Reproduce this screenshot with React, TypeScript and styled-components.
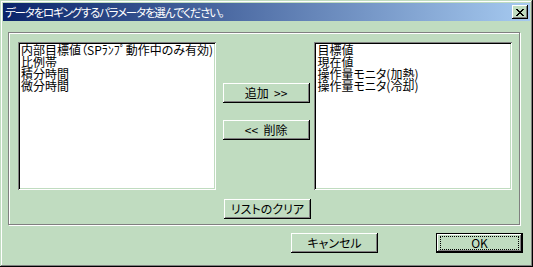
import React from 'react'
import styled, { createGlobalStyle, css } from 'styled-components'

const FACE = '#c0dcc0'

const GlobalStyle = createGlobalStyle`
  html, body {
    margin: 0;
    padding: 0;
    background: ${FACE};
  }
  body {
    font-family: "Noto Sans CJK JP", "Noto Sans", sans-serif;
    font-size: 12px;
    font-feature-settings: "palt";
  }
`

const leftItems = ['内部目標値（SPﾗﾝﾌﾟ動作中のみ有効)', '比例帯', '積分時間', '微分時間']
const rightItems = ['目標値', '現在値', '操作量モニタ(加熱)', '操作量モニタ(冷却)']

const App: React.FC = () => {
  return (
    <>
      <GlobalStyle />
      <Window>
        <TitleBar>
          <TitleText>データをロギングするパラメータを選んでください。</TitleText>
          <CloseButton aria-label="close">
            <svg width="8" height="7" viewBox="0 0 8 7" shapeRendering="crispEdges">
              <path
                fill="#000"
                d="M0 0h2v1h-2zM6 0h2v1h-2zM1 1h2v1h-2zM5 1h2v1h-2zM2 2h4v1h-4zM3 3h2v1h-2zM2 4h4v1h-4zM1 5h2v1h-2zM5 5h2v1h-2zM0 6h2v1h-2zM6 6h2v1h-2z"
              />
            </svg>
          </CloseButton>
        </TitleBar>
        <Body>
          <GroupBox>
            <ListsRow>
              <ListBox>
                {leftItems.map((t) => (
                  <ListItem key={t}>{t}</ListItem>
                ))}
              </ListBox>
              <MiddleCol>
                <Button>追加&nbsp;&nbsp;&gt;&gt;</Button>
                <Button>&lt;&lt;&nbsp;&nbsp;削除</Button>
              </MiddleCol>
              <ListBox>
                {rightItems.map((t) => (
                  <ListItem key={t}>{t}</ListItem>
                ))}
              </ListBox>
            </ListsRow>
            <ClearRow>
              <Button>リストのクリア</Button>
            </ClearRow>
          </GroupBox>
          <Footer>
            <Button>キャンセル</Button>
            <Button $default>
              <FocusRing>OK</FocusRing>
            </Button>
          </Footer>
        </Body>
      </Window>
    </>
  )
}

const Window = styled.div`
  width: 533px;
  height: 267px;
  box-sizing: border-box;
  padding: 3px;
  display: flex;
  flex-direction: column;
  background: ${FACE};
  box-shadow: inset -1px -1px #000, inset 1px 1px ${FACE}, inset -2px -2px #808080,
    inset 2px 2px #fff;
`

const TitleBar = styled.div`
  height: 18px;
  display: flex;
  align-items: center;
  justify-content: space-between;
  padding: 0 2px 0 2px;
  background: linear-gradient(to right, #0a246a, #a6caf0);
`

const TitleText = styled.div`
  color: #fff;
  font-size: 11.5px;
  letter-spacing: -1.2px;
  line-height: 18px;
  white-space: nowrap;
`

const CloseButton = styled.div`
  width: 16px;
  height: 14px;
  box-sizing: border-box;
  display: flex;
  align-items: center;
  justify-content: center;
  padding-top: 1px;
  background: ${FACE};
  box-shadow: inset -1px -1px #000, inset 1px 1px #fff, inset -2px -2px #808080,
    inset 2px 2px ${FACE};
`

const Body = styled.div`
  padding: 11px 0 0 5px;
`

const GroupBox = styled.div`
  width: 512px;
  height: 193px;
  box-sizing: border-box;
  padding: 9px 7px 0 9px;
  border: 1px solid #808080;
  box-shadow: inset 1px 1px #fff, 1px 1px #fff;
`

const ListsRow = styled.div`
  display: flex;
  align-items: flex-start;
`

const ListBox = styled.div`
  width: 198px;
  height: 148px;
  box-sizing: border-box;
  padding: 2px 2px 2px 3px;
  background: #fff;
  overflow: hidden;
  box-shadow: inset 1px 1px #808080, inset -1px -1px #fff, inset 2px 2px #000,
    inset -2px -2px ${FACE};
`

const ListItem = styled.div`
  color: #000;
  font-size: 12px;
  line-height: 12px;
  white-space: nowrap;
`

const MiddleCol = styled.div`
  width: 99px;
  box-sizing: border-box;
  padding: 41px 0 0 7px;
  display: flex;
  flex-direction: column;
  gap: 17px;
`

const ClearRow = styled.div`
  margin-top: 9px;
  padding-left: 206px;
`

const Footer = styled.div`
  display: flex;
  justify-content: flex-end;
  gap: 58px;
  margin-top: 8px;
  padding-right: 7px;
`

const Button = styled.div<{ $default?: boolean }>`
  width: 87px;
  height: 20px;
  box-sizing: border-box;
  display: flex;
  align-items: center;
  justify-content: center;
  color: #000;
  font-size: 12px;
  line-height: 12px;
  white-space: nowrap;
  background: ${FACE};
  box-shadow: inset -1px -1px #000, inset 1px 1px #fff, inset -2px -2px #808080,
    inset 2px 2px ${FACE};
  ${(p) =>
    p.$default &&
    css`
      box-shadow: inset 0 0 0 1px #000, inset -2px -2px #000, inset 2px 2px #fff,
        inset -3px -3px #808080;
      padding: 3px 4px;
    `}
`

const FocusRing = styled.div`
  flex: 1;
  align-self: stretch;
  display: flex;
  align-items: center;
  justify-content: center;
  border: 1px dotted #000;
`

export default App
